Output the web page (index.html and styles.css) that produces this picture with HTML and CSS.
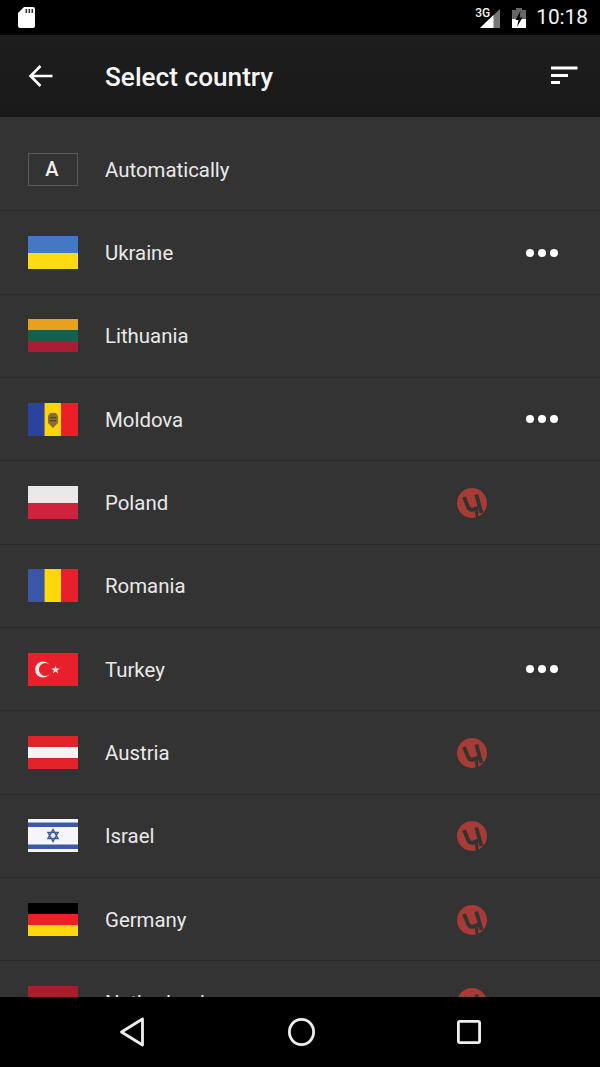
FILE: index.html
```html
<!DOCTYPE html>
<html lang="en">
<head>
<meta charset="utf-8">
<title>Select country</title>
<link rel="stylesheet" href="styles.css">
</head>
<body>
<svg class="defs" width="0" height="0" aria-hidden="true">
  <symbol id="torrent" viewBox="0 0 30 30">
    <circle cx="15" cy="15" r="15" fill="#a63c35"/>
    <path d="M7 9 L11 18.800 Q12.600 22.800 16.500 21.400 L22.800 19.200 M19.300 6.500 L22.800 19.200 L24.500 25" fill="none" stroke="#333" stroke-width="3.800"/>
    <path d="M17.500 23 L21 22 L21.500 30 L19 30 Z" fill="#333"/>
  </symbol>
  <symbol id="dots" viewBox="0 0 32 10">
    <circle cx="4" cy="5" r="4" fill="#fff"/>
    <circle cx="16" cy="5" r="4" fill="#fff"/>
    <circle cx="28" cy="5" r="4" fill="#fff"/>
  </symbol>
</svg>
<div class="screen">
  <div class="status">
    <svg class="sd" width="17" height="21" viewBox="0 0 17 21"><path d="M6 0H15Q17 0 17 2V19Q17 21 15 21H2Q0 21 0 19V6Z" fill="#fff"/><path d="M7.500 2h1.600v4H7.500zM10.500 2h1.600v4H10.500zM13.500 2h1.600v4H13.500z" fill="#333"/></svg>
    <div class="status-right">
      <div class="signal">
        <svg width="20" height="19" viewBox="0 0 20 19"><path d="M20 0V19H0Z" fill="#777"/><path d="M13.500 6V19H0Z" fill="#fff"/></svg>
        <span class="net">3G</span>
      </div>
      <svg class="battery" width="14" height="20" viewBox="0 0 14 20"><path d="M4 0h6v2h4v18H0V2h4z" fill="#666"/><path d="M0 11H14V20H0Z" fill="#fff"/><path d="M8.500 3 3.500 12H6.500L5 19 10.500 9.500H7.500Z" fill="#000"/></svg>
      <span class="clock">10:18</span>
    </div>
  </div>
  <header class="bar">
    <svg class="back" width="26" height="24" viewBox="0 0 26 24"><path d="M24.500 12H3M12.500 2 2.500 12 12.500 22" fill="none" stroke="#fff" stroke-width="2.600"/></svg>
    <h1 class="title">Select country</h1>
    <svg class="sort" width="27" height="18" viewBox="0 0 27 18"><path d="M0 2H26.500M0 9.500H17M0 16.500H9" fill="none" stroke="#fff" stroke-width="3.200"/></svg>
  </header>
  <main class="list">
    <div class="row">
      <span class="flag auto">A</span><span class="name">Automatically</span>
    </div>
    <div class="row">
      <span class="flag"><svg viewBox="0 0 50 33"><rect width="50" height="17" fill="#4379c4"/><rect y="17" width="50" height="16" fill="#fddb12"/></svg></span>
      <span class="name">Ukraine</span>
      <svg class="dots"><use href="#dots"/></svg>
    </div>
    <div class="row">
      <span class="flag"><svg viewBox="0 0 50 33"><rect width="50" height="11" fill="#e8a11f"/><rect y="11" width="50" height="11" fill="#14604a"/><rect y="22" width="50" height="11" fill="#a81e37"/></svg></span>
      <span class="name">Lithuania</span>
    </div>
    <div class="row">
      <span class="flag"><svg viewBox="0 0 50 33"><rect width="16.500" height="33" fill="#2b439e"/><rect x="16.500" width="16.500" height="33" fill="#fbd40d"/><rect x="33" width="17" height="33" fill="#ea2026"/><path d="M22 10h6l2 3v7l-5 5-5-5v-7z" fill="#8a6d35"/><path d="M22 14h6v1.200h-6zM22 17h6v1.200h-6z" fill="#5a4624"/></svg></span>
      <span class="name">Moldova</span>
      <svg class="dots"><use href="#dots"/></svg>
    </div>
    <div class="row">
      <span class="flag"><svg viewBox="0 0 50 33"><rect width="50" height="17" fill="#e9e9ea"/><rect y="17" width="50" height="16" fill="#d2213f"/></svg></span>
      <span class="name">Poland</span>
      <svg class="torrent"><use href="#torrent"/></svg>
    </div>
    <div class="row">
      <span class="flag"><svg viewBox="0 0 50 33"><rect width="16.500" height="33" fill="#3b55a8"/><rect x="16.500" width="16.500" height="33" fill="#fdd90c"/><rect x="33" width="17" height="33" fill="#e8202c"/></svg></span>
      <span class="name">Romania</span>
    </div>
    <div class="row">
      <span class="flag"><svg viewBox="0 0 50 33"><rect width="50" height="33" fill="#e8202c"/><circle cx="15" cy="16.500" r="8" fill="#f7e6e4"/><circle cx="17.300" cy="16.500" r="6.400" fill="#e8202c"/><path d="m27.500 12.500 1.100 2.900 3.100.1-2.500 1.900 1 3-2.700-1.800-2.600 1.800.9-3-2.500-1.900 3.100-.1z" fill="#f7e6e4"/></svg></span>
      <span class="name">Turkey</span>
      <svg class="dots"><use href="#dots"/></svg>
    </div>
    <div class="row">
      <span class="flag"><svg viewBox="0 0 50 33"><rect width="50" height="33" fill="#e2242a"/><rect y="11" width="50" height="11" fill="#f5f3f3"/></svg></span>
      <span class="name">Austria</span>
      <svg class="torrent"><use href="#torrent"/></svg>
    </div>
    <div class="row">
      <span class="flag"><svg viewBox="0 0 50 33"><rect width="50" height="33" fill="#f6f6f8"/><rect y="3.500" width="50" height="4.500" fill="#3a5aa6"/><rect y="25.500" width="50" height="4.500" fill="#3a5aa6"/><path d="M25 10.500 30 19.500H20ZM25 22.500 20 13.500H30Z" fill="none" stroke="#3a5aa6" stroke-width="1.500"/></svg></span>
      <span class="name">Israel</span>
      <svg class="torrent"><use href="#torrent"/></svg>
    </div>
    <div class="row">
      <span class="flag"><svg viewBox="0 0 50 33"><rect width="50" height="11" fill="#000"/><rect y="11" width="50" height="11" fill="#ee2027"/><rect y="22" width="50" height="11" fill="#fdd80c"/></svg></span>
      <span class="name">Germany</span>
      <svg class="torrent"><use href="#torrent"/></svg>
    </div>
    <div class="row">
      <span class="flag"><svg viewBox="0 0 50 33"><rect width="50" height="11" fill="#a81f2c"/><rect y="11" width="50" height="11" fill="#f1f1f1"/><rect y="22" width="50" height="11" fill="#2b4a98"/></svg></span>
      <span class="name">Netherlands</span>
      <svg class="torrent"><use href="#torrent"/></svg>
    </div>
  </main>
  <nav class="nav">
    <svg width="26" height="30" viewBox="0 0 26 30"><path d="M23.500 2 2.500 15 23.500 28Z" fill="none" stroke="#eee" stroke-width="2.800" stroke-linejoin="round"/></svg>
    <svg width="27" height="30" viewBox="0 0 27 30"><ellipse cx="13.500" cy="15" rx="12.100" ry="12.600" fill="none" stroke="#eee" stroke-width="2.800"/></svg>
    <svg width="24" height="24" viewBox="0 0 24 24"><rect x="1.400" y="1.400" width="21.200" height="21.200" rx="1.500" fill="none" stroke="#eee" stroke-width="2.800"/></svg>
  </nav>
</div>
</body>
</html>
```
FILE: styles.css
```css
* { box-sizing: border-box; }
html, body { margin: 0; padding: 0; background: #000; }
body { font-family: Roboto, "Liberation Sans", sans-serif; color: #fff; }
.defs { position: absolute; }
.screen { width: 600px; height: 1067px; display: flex; flex-direction: column; overflow: hidden; background: #333; }

.status { flex: 0 0 35px; background: #000; display: flex; justify-content: space-between; align-items: center; padding: 0 12px 0 18px; }
.status-right { display: flex; align-items: center; }
.signal { position: relative; width: 20px; height: 19px; margin-right: 12px; margin-top: 1px; }
.signal svg { display: block; }
.net { position: absolute; left: -5px; top: -2px; font-size: 12px; font-weight: 500; line-height: 12px; color: #f4f4f4; }
.battery { margin-right: 10px; }
.clock { font-size: 20.800px; line-height: 35px; color: #f4f4f4; }

.bar { flex: 0 0 82px; background: linear-gradient(#1d1d1d, #1a1a1a); display: flex; align-items: center; padding: 0 22px 0 28px; }
.back { flex: none; margin-right: 51px; margin-bottom: 1px; }
.title { flex: 1; margin: 0; padding-top: 1px; font-size: 26.200px; font-weight: 500; color: #f6f6f6; }
.sort { flex: none; margin-bottom: 2px; }

.list { flex: 1; min-height: 0; overflow: hidden; padding-top: 11px; }
.row { height: 83.350px; display: flex; align-items: center; padding-left: 28px; border-bottom: 1px solid #2b2b2b; }
.flag { flex: 0 0 50px; height: 33px; margin-right: 27px; display: block; }
.flag svg { display: block; width: 50px; height: 33px; }
.auto { border: 1px solid #5a5a5a; text-align: center; font-size: 20px; font-weight: 500; line-height: 30px; color: #eee; padding-right: 2px; }
.name { font-size: 20.400px; color: #e9e9e9; flex: 1; padding-top: 1px; }
.dots { flex: none; width: 32px; height: 10px; margin-right: 42px; }
.torrent { flex: none; width: 30px; height: 30px; margin-right: 113px; margin-top: 1px; }

.nav { flex: 0 0 70px; background: #000; display: flex; align-items: center; justify-content: space-between; padding: 0 119px; position: relative; z-index: 1; }
```
